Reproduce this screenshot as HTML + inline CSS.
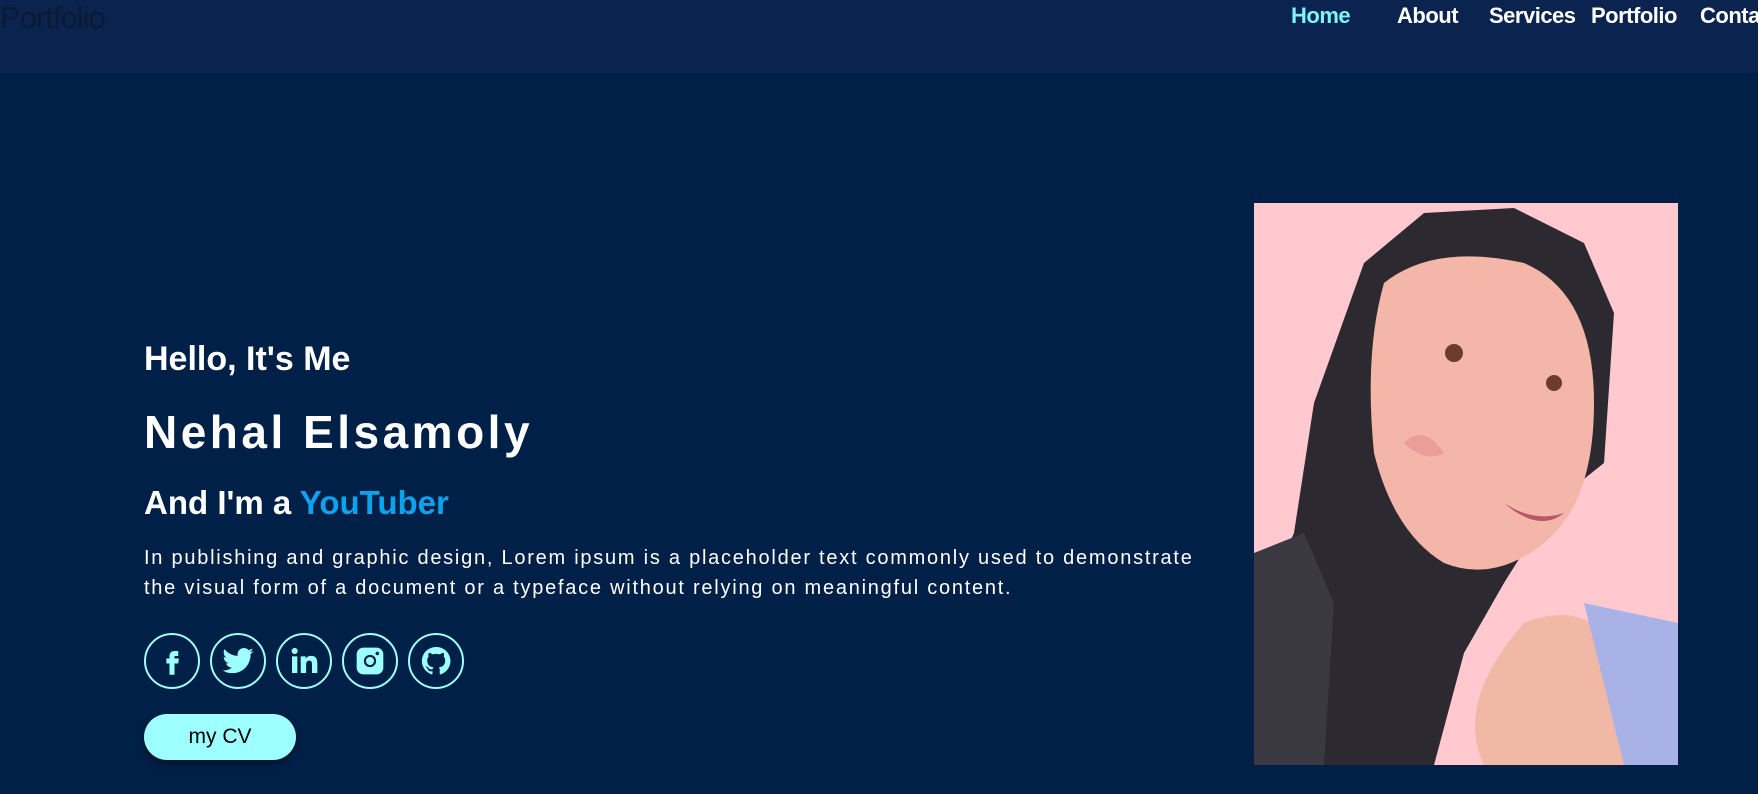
<!DOCTYPE html>
<html><head><meta charset="utf-8"><style>
*{margin:0;padding:0;box-sizing:border-box}
body{width:1758px;height:794px;overflow:hidden;background:#002048;font-family:"Liberation Sans",sans-serif;position:relative}
.nav{position:absolute;left:0;top:0;width:1758px;height:73px;background:#0a234f}
.logo{position:absolute;left:0;top:0px;font-size:31px;color:#0d1a33;letter-spacing:-1px}
.nav a{position:absolute;top:3px;font-size:22px;font-weight:bold;color:#fff;text-decoration:none;letter-spacing:-0.5px;white-space:nowrap}
.t{position:absolute;left:144px;color:#fff;font-weight:bold;white-space:nowrap}
.p{position:absolute;left:144px;top:543px;font-size:20px;color:#fff;letter-spacing:1.75px;line-height:30px;width:1085px}
.ic{position:absolute;top:633px;width:56px;height:56px;border:2px solid #9effff;border-radius:50%;display:flex;align-items:center;justify-content:center}
.btn{position:absolute;left:144px;top:714px;width:152px;height:46px;border-radius:23px;background:#9effff;color:#000;font-size:21px;display:flex;align-items:center;justify-content:center;box-shadow:0 4px 8px rgba(0,0,0,.4)}
</style></head><body>
<div class="nav">
<div class="logo">Portfolio</div>
<a style="left:1291px;color:#7ff4f8">Home</a>
<a style="left:1397px">About</a>
<a style="left:1489px">Services</a>
<a style="left:1591px">Portfolio</a>
<a style="left:1700px">Contact</a>
</div>
<div class="t" style="top:340px;font-size:34px">Hello, It's Me</div>
<div class="t" style="top:405px;font-size:46px;font-weight:900;letter-spacing:3.5px">Nehal Elsamoly</div>
<div class="t" style="top:484px;font-size:33px">And I'm a <span style="color:#0aa3ee">YouTuber</span></div>
<div class="p">In publishing and graphic design, Lorem ipsum is a placeholder text commonly used to demonstrate the visual form of a document or a typeface without relying on meaningful content.</div>
<div class="ic" style="left:144px"><svg width="30" height="30" viewBox="0 0 24 24"><path fill="#9effff" d="M14 8h3V4h-3c-2.5 0-4 1.6-4 4v2H7.5v4H10v9h4v-9h3l.5-4H14V8.5c0-.3.2-.5.5-.5z"/></svg></div>
<div class="ic" style="left:210px"><svg width="34" height="34" viewBox="0 0 24 24"><path fill="#9effff" d="M23 5c-.8.4-1.7.6-2.6.7.9-.6 1.6-1.4 2-2.5-.9.5-1.9.9-2.9 1.1A4.5 4.5 0 0 0 11.8 8.4 12.8 12.8 0 0 1 2.5 3.700a4.5 4.5 0 0 0 1.400 6c-.7 0-1.400-.2-2-.6 0 2.200 1.500 4 3.600 4.400-.7.200-1.400.200-2 .1.600 1.800 2.200 3.100 4.200 3.100A9 9 0 0 1 1 18.600 12.800 12.800 0 0 0 8 20.600c8.300 0 12.900-6.900 12.900-12.900v-.6c.9-.6 1.600-1.400 2.100-2.100z"/></svg></div>
<div class="ic" style="left:276px"><svg width="32" height="32" viewBox="0 0 24 24"><circle cx="5" cy="4.5" r="2.3" fill="#9effff"/><path fill="#9effff" d="M3 8.5h4V21H3zM9.5 8.5h3.8v1.8c.6-1.100 2-2.100 4-2.100 4 0 4.700 2.600 4.700 6V21h-4v-6c0-1.500 0-3.300-2-3.300s-2.400 1.600-2.400 3.200V21h-4z"/></svg></div>
<div class="ic" style="left:342px"><svg width="32" height="32" viewBox="0 0 24 24"><rect x="2" y="2" width="20" height="20" rx="5" fill="#9effff"/><circle cx="12" cy="12" r="4.6" fill="#002048"/><circle cx="12" cy="12" r="3" fill="#9effff"/><circle cx="17.5" cy="6.4" r="1.3" fill="#002048"/></svg></div>
<div class="ic" style="left:408px"><svg width="32" height="32" viewBox="0 0 24 24"><path fill="#9effff" d="M12 1.5A10.500 10.500 0 0 0 8.700 22c.5.1.7-.2.7-.5v-1.800c-2.900.6-3.500-1.400-3.500-1.400-.5-1.200-1.200-1.500-1.200-1.500-1-.7.1-.7.1-.7 1 .1 1.600 1.100 1.600 1.100.9 1.600 2.500 1.100 3.100.9.1-.7.4-1.100.7-1.400-2.300-.3-4.800-1.200-4.800-5.200 0-1.100.4-2.100 1.100-2.800-.1-.3-.5-1.300.1-2.800 0 0 .9-.3 2.900 1.100a10 10 0 0 1 5.300 0c2-1.400 2.900-1.100 2.900-1.100.6 1.500.2 2.500.1 2.800.7.700 1.100 1.700 1.100 2.800 0 4-2.500 4.900-4.800 5.200.4.300.7 1 .7 1.900v2.900c0 .3.2.6.7.5A10.500 10.500 0 0 0 12 1.500z"/></svg></div>
<div class="btn">my CV</div>
<svg style="position:absolute;left:1254px;top:203px" width="424" height="562" viewBox="0 0 424 562">
<rect width="424" height="562" fill="#ffc9cf"/>
<path d="M0 562 L0 420 L40 330 L60 200 L110 60 L170 10 L260 5 L330 40 L360 110 L350 260 L300 300 L250 380 L210 450 L180 562Z" fill="#2c2a30"/>
<path d="M0 350 L50 330 L80 400 L70 562 L0 562Z" fill="#3a3840"/>
<path d="M130 80 Q180 40 270 60 Q340 90 340 200 Q340 300 290 340 Q240 380 190 360 Q140 330 120 250 Q110 150 130 80Z" fill="#f3b6a9"/>
<path d="M150 240 Q170 220 190 250 Q170 260 150 240Z" fill="#e68c8f" opacity=".6"/>
<path d="M250 300 Q280 320 310 310 Q285 330 250 300Z" fill="#b9566a"/>
<circle cx="200" cy="150" r="9" fill="#6b3d2a"/><circle cx="300" cy="180" r="8" fill="#6b3d2a"/>
<path d="M270 420 Q320 400 350 430 L370 562 L230 562 Q200 500 270 420Z" fill="#f0b8a5"/>
<path d="M330 400 L424 420 L424 562 L370 562Z" fill="#a9b2e6"/>
</svg>
</body></html>
